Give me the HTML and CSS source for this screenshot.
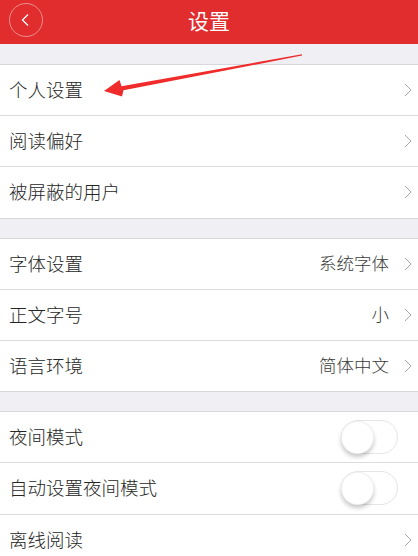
FILE: index.html
```html
<!DOCTYPE html>
<html lang="zh">
<head>
<meta charset="utf-8">
<title>设置</title>
<link rel="stylesheet" href="styles.css">
</head>
<body>
<div class="page">
  <header class="topbar">
    <div class="back">
      <svg width="10" height="14" viewBox="0 0 10 14"><polyline points="8,1.5 2.5,7 8,12.5" fill="none" stroke="#fff" stroke-width="1.3"/></svg>
    </div>
    <h1 class="title">设置</h1>
    <div class="spacer-cell"></div>
  </header>

  <div class="gap first"></div>
  <ul class="group">
    <li class="row"><span class="label">个人设置</span><svg class="chev" width="8" height="14" viewBox="0 0 8 14"><polyline points="1,1 7,7 1,13" fill="none" stroke="#a6a6a6" stroke-width="1"/></svg></li>
    <li class="row"><span class="label">阅读偏好</span><svg class="chev" width="8" height="14" viewBox="0 0 8 14"><polyline points="1,1 7,7 1,13" fill="none" stroke="#a6a6a6" stroke-width="1"/></svg></li>
    <li class="row"><span class="label">被屏蔽的用户</span><svg class="chev" width="8" height="14" viewBox="0 0 8 14"><polyline points="1,1 7,7 1,13" fill="none" stroke="#a6a6a6" stroke-width="1"/></svg></li>
  </ul>

  <div class="gap"></div>
  <ul class="group">
    <li class="row"><span class="label">字体设置</span><span class="value">系统字体</span><svg class="chev" width="8" height="14" viewBox="0 0 8 14"><polyline points="1,1 7,7 1,13" fill="none" stroke="#a6a6a6" stroke-width="1"/></svg></li>
    <li class="row"><span class="label">正文字号</span><span class="value">小</span><svg class="chev" width="8" height="14" viewBox="0 0 8 14"><polyline points="1,1 7,7 1,13" fill="none" stroke="#a6a6a6" stroke-width="1"/></svg></li>
    <li class="row"><span class="label">语言环境</span><span class="value">简体中文</span><svg class="chev" width="8" height="14" viewBox="0 0 8 14"><polyline points="1,1 7,7 1,13" fill="none" stroke="#a6a6a6" stroke-width="1"/></svg></li>
  </ul>

  <div class="gap"></div>
  <ul class="group">
    <li class="row"><span class="label">夜间模式</span><span class="switch"><span class="knob"></span></span></li>
    <li class="row"><span class="label">自动设置夜间模式</span><span class="switch"><span class="knob"></span></span></li>
    <li class="row"><span class="label">离线阅读</span><svg class="chev" width="8" height="14" viewBox="0 0 8 14"><polyline points="1,1 7,7 1,13" fill="none" stroke="#a6a6a6" stroke-width="1"/></svg></li>
  </ul>

  <svg class="arrow" width="418" height="120" viewBox="0 0 418 120">
    <polygon points="104,91 119.5,80 121.5,86.3 302,54.3 302,55.6 123.5,90.3 122,96.5" fill="#ef2b2b"/>
  </svg>
</div>
</body>
</html>
```

FILE: styles.css
```css
* { box-sizing: border-box; }
html, body { margin: 0; padding: 0; }
body {
  background: #efeff4;
  font-family: "Noto Sans CJK SC", "Noto Sans", sans-serif;
  color: #333;
  width: 418px;
  height: 556px;
  overflow: hidden;
}
.page { position: relative; }

.topbar {
  height: 44px;
  background: #e12d2e;
  display: grid;
  grid-template-columns: 52px 1fr 52px;
  align-items: center;
  padding-bottom: 4px;
}
.back {
  width: 34px;
  height: 34px;
  margin-left: 9px;
  border: 1px solid rgba(255, 255, 255, 0.45);
  border-radius: 50%;
  display: flex;
  align-items: center;
  justify-content: center;
  padding-right: 2px;
}
.back svg { display: block; }
.title {
  margin: 0;
  text-align: center;
  color: #fff;
  font-size: 21px;
  font-weight: 400;
  line-height: 24px;
}

.gap {
  height: 20px;
  background: #efeff4;
  border-bottom: 1px solid #d8d8dc;
}
.gap.first { height: 21px; }

.group {
  list-style: none;
  margin: 0;
  padding: 0;
  background: #fff;
}
.row {
  height: 51.2px;
  display: flex;
  align-items: center;
  padding: 0 6px 0 9px;
  border-bottom: 1px solid #dcdcdc;
}
.group .row:last-child { border-bottom: 1px solid #d8d8dc; }
.label {
  flex: 1;
  font-size: 18.5px;
  font-weight: 300;
  color: #262626;
  line-height: 24px;
  margin-top: -2px;
}
.value {
  font-size: 17.5px;
  font-weight: 300;
  color: #3a3a3a;
  margin-right: 15px;
  line-height: 24px;
  margin-top: -2px;
}
.chev {
  display: block;
  flex: none;
}
.switch {
  width: 57px;
  height: 34px;
  margin-right: 14px;
  border: 1.5px solid #e6e6e6;
  border-radius: 17px;
  background: #fff;
  display: flex;
  align-items: center;
}
.knob {
  width: 33px;
  height: 33px;
  margin-left: -1px;
  border-radius: 50%;
  background: #fff;
  border: 0.5px solid rgba(0, 0, 0, 0.06);
  box-shadow: 0 3px 4px rgba(0, 0, 0, 0.22);
}

.arrow {
  position: absolute;
  top: 0;
  left: 0;
  pointer-events: none;
}
```
